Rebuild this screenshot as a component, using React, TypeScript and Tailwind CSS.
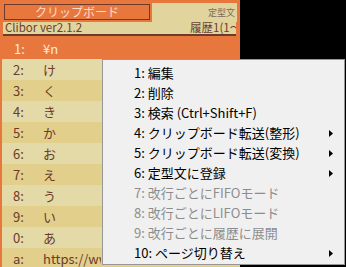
import React from "react";

const rows = [
  { key: "2", text: "け" },
  { key: "3", text: "く" },
  { key: "4", text: "き" },
  { key: "5", text: "か" },
  { key: "6", text: "お" },
  { key: "7", text: "え" },
  { key: "8", text: "う" },
  { key: "9", text: "い" },
  { key: "0", text: "あ" },
  { key: "a", text: "https://www.clibor.com/" },
];

const menuItems = [
  { label: "1: 編集" },
  { label: "2: 削除" },
  { label: "3: 検索 (Ctrl+Shift+F)" },
  { label: "4: クリップボード転送(整形)", sub: true },
  { label: "5: クリップボード転送(変換)", sub: true },
  { label: "6: 定型文に登録", sub: true },
  { label: "7: 改行ごとにFIFOモード", disabled: true },
  { label: "8: 改行ごとにLIFOモード", disabled: true },
  { label: "9: 改行ごとに履歴に展開", disabled: true },
  { label: "10: ページ切り替え", sub: true },
];

const font = "font-['Noto_Sans_CJK_JP','Noto_Sans',sans-serif]";

export default function App() {
  return (
    <div className={`relative w-[346px] h-[267px] overflow-hidden bg-black ${font}`}>
      {/* main clibor window */}
      <div className="flex h-full w-[240px] flex-col bg-[#e8773e]">
        {/* tabs */}
        <div className="flex h-[22px] items-start pl-[4px] pt-[3px]">
          <div className="mt-[1px] flex h-[16px] w-[146px] items-center justify-center border border-[#6e3a2b] text-[12px] leading-none text-[#f9dccd]">
            クリップボード
          </div>
          <div className="ml-[2px] flex h-[19px] w-[85px] items-center justify-end bg-[#e2d49d] pr-[2px] text-[9px] leading-none text-[#7b6a5a]">
            定型文
          </div>
        </div>
        <div className="mr-[4px] h-[3px] bg-[#6e3a2b]" />
        {/* status bar */}
        <div className="mx-[3px] mr-[4px] flex h-[17px] items-center whitespace-nowrap border-b-2 border-[#6e3a2b] bg-[#e2d49d] text-[11.5px] leading-none text-[#6b4030]">
          <span className="w-[187px] shrink-0 pl-[2px]">Clibor ver2.1.2</span>
          <span className="w-[46px] shrink-0 overflow-x-clip">履歴1(1～36)</span>
        </div>
        {/* list */}
        <div className="mt-[2px] flex flex-col pl-[2px]">
          <div className="flex h-[21px] items-center pl-[12px] text-[13px] leading-[21px] text-[#fde8da]">
            <span className="w-[29px]">1:</span>
            <span>¥n</span>
          </div>
          {rows.map((r, i) => (
            <div
              key={r.key}
              className={`flex h-[21px] shrink-0 items-center whitespace-nowrap pl-[11px] text-[13px] leading-[21px] text-[#6e3a2b] ${
                i % 2 === 0 ? "bg-[#e3daa8]" : "bg-[#e2cf8b]"
              }`}
            >
              <span className="w-[30px]">{r.key}:</span>
              <span className="max-w-[58px] overflow-x-clip">{r.text}</span>
            </div>
          ))}
        </div>
      </div>

      {/* context menu */}
      <div className="absolute left-[102px] top-[59px] h-[206px] w-[243px] border border-[#979797] bg-[#f0f0f0] pt-[3px]">
        {menuItems.map((m) => (
          <div
            key={m.label}
            className={`flex h-[20px] items-center justify-between pl-[31px] pr-[11px] text-[13px] leading-[20px] ${
              m.disabled ? "text-[#8d8d8d]" : "text-black"
            }`}
          >
            <span className="whitespace-nowrap">{m.label}</span>
            {m.sub && (
              <svg width="4" height="7" viewBox="0 0 4 7">
                <path d="M0 0 L4 3.5 L0 7 Z" fill="#000" />
              </svg>
            )}
          </div>
        ))}
      </div>
    </div>
  );
}
